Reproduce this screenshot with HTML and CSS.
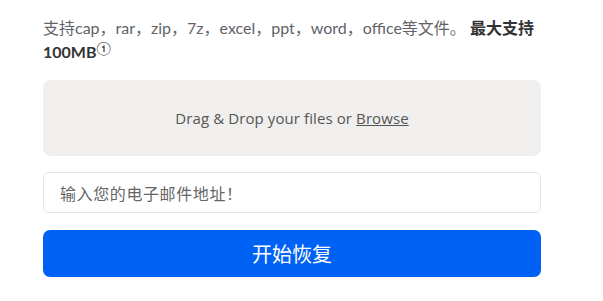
FILE: index.html
```html
<!DOCTYPE html>
<html lang="zh-CN">
<head>
<meta charset="utf-8">
<link rel="stylesheet" href="styles.css">
</head>
<body>
<div class="wrap">
  <p class="info">支持cap，rar，zip，7z，excel，ppt，word，office等文件。 <strong>最大支持100MB</strong><sup class="tip">①</sup></p>
  <div class="drop"><span class="drop-text">Drag &amp; Drop your files or <span class="browse">Browse</span></span></div>
  <div class="email">输入您的电子邮件地址！</div>
  <div class="btn">开始恢复</div>
</div>
</body>
</html>
```
FILE: styles.css
```css
html, body { margin: 0; padding: 0; background: #fff; }
body { font-family: "Open Sans", "Noto Sans CJK SC", sans-serif; }
.wrap { width: 498px; margin-left: 43px; padding-top: 16px; }
.info { margin: 0; font-family: "Lato", "Noto Sans CJK SC", sans-serif; font-size: 16px; line-height: 24px; color: #5f6368; }
.info strong { color: #333; font-weight: 700; }
.tip { font-size: 13px; line-height: 0; vertical-align: 5px; color: #333; }
.drop { margin-top: 16px; height: 76px; background: #f0efed; border-radius: 8px; display: flex; align-items: center; justify-content: center; font-size: 15px; letter-spacing: 0.1px; color: #555; }
.browse { text-decoration: underline; }
.email { margin-top: 16px; height: 41px; box-sizing: border-box; border: 1px solid #e3e3ec; border-radius: 6px; display: flex; align-items: center; padding-left: 16px; font-size: 16px; letter-spacing: 0.6px; color: #666; }
.btn { margin-top: 17px; height: 47px; background: #0062f5; border-radius: 7px; display: flex; align-items: center; justify-content: center; color: #fff; font-size: 20px; }
```
